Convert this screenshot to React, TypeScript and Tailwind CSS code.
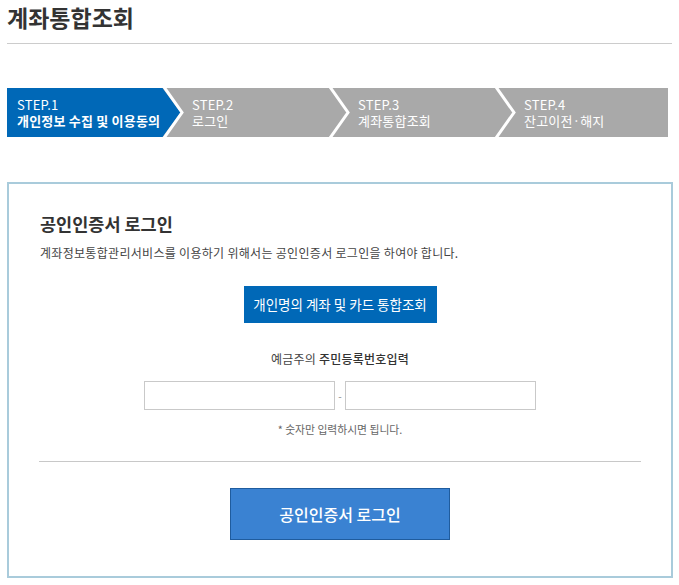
import React from "react";

const steps = [
  { no: "STEP.1", label: "개인정보 수집 및 이용동의", active: true },
  { no: "STEP.2", label: "로그인", active: false },
  { no: "STEP.3", label: "계좌통합조회", active: false },
  { no: "STEP.4", label: "잔고이전·해지", active: false },
];

function Chevron({ from }: { from: string }) {
  return (
    <svg
      className="absolute top-0 left-[154px] z-10"
      width="24"
      height="49"
      viewBox="0 0 24 49"
    >
      <rect x="0" y="0" width="24" height="49" fill="#a9a9a9" />
      <polygon points="0,0 1.5,0 19.5,24.5 1.5,49 0,49" fill={from} />
      <polyline
        points="3,-1 21,24.5 3,50"
        fill="none"
        stroke="#ffffff"
        strokeWidth="3"
        strokeLinejoin="miter"
      />
    </svg>
  );
}

export default function App() {
  return (
    <div className="w-[679px] min-h-[585px] bg-white font-['Noto_Sans_CJK_KR','Noto_Sans',sans-serif] text-[#333]">
      {/* Header */}
      <div className="ml-[7px] mr-[7px] h-[44px] border-b border-[#cccccc]">
        <h1 className="text-[23px] leading-[34px] font-bold text-[#333]">
          계좌통합조회
        </h1>
      </div>

      {/* Steps */}
      <div className="ml-[7px] mt-[44px] flex h-[49px] w-[661px]">
        {steps.map((s, i) => (
          <div
            key={s.no}
            className={
              (i < 3 ? "w-[166px] " : "flex-1 ") +
              (s.active ? "bg-[#0068b7] pl-[10px] " : "bg-[#a9a9a9] pl-[19px] ") +
              "relative flex items-center text-white"
            }
          >
            <div className="text-[13px] leading-[16px] tracking-[0.2px]">
              <div>{s.no}</div>
              <div className={s.active ? "font-bold" : ""}>{s.label}</div>
            </div>
            {i < 3 && <Chevron from={s.active ? "#0068b7" : "#a9a9a9"} />}
          </div>
        ))}
      </div>

      {/* Login box */}
      <div className="ml-[7px] mt-[45px] w-[666px] h-[396px] border-2 border-[#a9cbdb] pt-[27px] px-[30px] pb-[35px]">
        <h2 className="text-[17.5px] leading-[25px] font-bold text-[#333] pl-[1px]">
          공인인증서 로그인
        </h2>
        <p className="mt-[8px] text-[12px] leading-[18px] text-[#444] tracking-[0.3px] pl-[1px]">
          계좌정보통합관리서비스를 이용하기 위해서는 공인인증서 로그인을 하여야 합니다.
        </p>

        <div className="mt-[24px] flex justify-center">
          <button className="w-[193px] h-[37px] bg-[#0068b7] text-white text-[13.5px]">
            개인명의 계좌 및 카드 통합조회
          </button>
        </div>

        <p className="mt-[27px] text-center text-[12px] leading-[18px] text-[#444] tracking-[0.2px]">
          예금주의 <span className="text-[#333] font-medium">주민등록번호입력</span>
        </p>

        <div className="mt-[13px] flex items-center justify-center">
          <input
            type="text"
            className="w-[191px] h-[29px] border border-[#c9c9c9] bg-white outline-none"
          />
          <span className="w-[10px] text-center text-[10px] text-[#888]">-</span>
          <input
            type="text"
            className="w-[191px] h-[29px] border border-[#c9c9c9] bg-white outline-none"
          />
        </div>

        <p className="mt-[12px] text-center text-[10.8px] leading-[14px] text-[#666]">
          * 숫자만 입력하시면 됩니다.
        </p>

        <div className="mt-[25px] h-px bg-[#c8c8c8]" />

        <div className="mt-[26px] flex justify-center">
          <button className="w-[220px] h-[52px] bg-[#3a82d2] border border-[#1f5c9e] text-white text-[16px] font-medium">
            공인인증서 로그인
          </button>
        </div>
      </div>
    </div>
  );
}
